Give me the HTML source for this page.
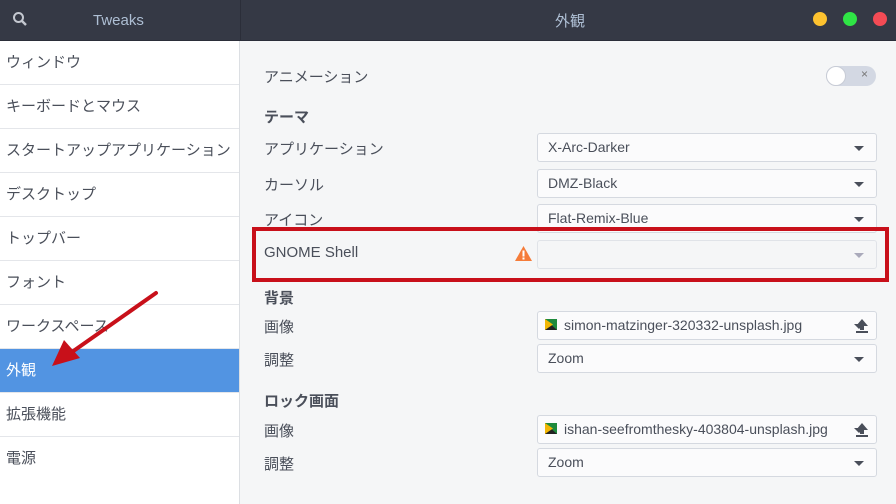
<!DOCTYPE html><html><head><meta charset="utf-8"><style>
*{margin:0;padding:0;box-sizing:border-box}
body{width:896px;height:504px;overflow:hidden;font-family:"Liberation Sans","Noto Sans CJK JP",sans-serif;background:#f5f6f7;position:relative;color:#5c616c}
.hdr{position:absolute;left:0;top:0;width:896px;height:41px;background:#353945;border-bottom:1px solid #2b2e39}
.sep{position:absolute;left:240px;top:0;width:1px;height:41px;background:#2b2e39}
.side{position:absolute;left:0;top:41px;width:240px;height:463px;background:#fff;border-right:1px solid #dcdfe3}
.row{height:44px;border-bottom:1px solid #e4e6ea;padding-left:6px;line-height:44px;font-size:15px;color:#4a4f5a}
.row.sel{background:#5294e2;color:#fff}
.lbl{position:absolute;font-size:15px;color:#4a4f5a}
.b{font-weight:bold;color:#4a4f5a}
.dd{position:absolute;left:537px;width:340px;height:29px;border:1px solid #d5d9e0;border-radius:3px;background:#fbfbfc;font-size:14px;color:#4a4f5a;padding-left:10px;line-height:27px}
.dd:after{content:"";position:absolute;right:12px;top:12px;border:5px solid transparent;border-top:5px solid #4a4f5a;border-bottom:0}
.dd.dis:after{border-top-color:#aab}
.dot{position:absolute;top:12px;width:14px;height:14px;border-radius:50%}
</style></head><body>
<div class="hdr"><div class="sep"></div>
<svg style="position:absolute;left:12px;top:11px" width="16" height="16"><circle cx="6.5" cy="6.5" r="4.5" fill="none" stroke="#c4c8d0" stroke-width="2"/><line x1="10" y1="10" x2="14" y2="14" stroke="#c4c8d0" stroke-width="2.4"/></svg>
<div style="position:absolute;left:93px;top:12px;font-size:15px;color:#aebfd4">Tweaks</div>
<div style="position:absolute;left:555px;top:10px;font-size:15px;color:#aebfd4">外観</div>
<div class="dot" style="left:813px;background:#fdc22f"></div>
<div class="dot" style="left:843px;background:#2fe545"></div>
<div class="dot" style="left:873px;background:#f44b55"></div>
</div>
<div class="side">
<div class="row">ウィンドウ</div><div class="row">キーボードとマウス</div><div class="row">スタートアップアプリケーション</div><div class="row">デスクトップ</div><div class="row">トップバー</div><div class="row">フォント</div><div class="row">ワークスペース</div><div class="row sel">外観</div><div class="row">拡張機能</div><div class="row" style="border:0">電源</div>
</div>
<div class="lbl" style="left:264px;top:66px">アニメーション</div>
<div style="position:absolute;left:826px;top:66px;width:50px;height:20px;border-radius:10px;background:#d3d8e3"><div style="position:absolute;left:0;top:0;width:20px;height:20px;border-radius:50%;background:#fff;border:1px solid #c8ccd6"></div><span style="position:absolute;left:35px;top:1px;font-size:12px;color:#777">×</span></div>
<div class="lbl b" style="left:264px;top:106px">テーマ</div>
<div class="lbl" style="left:264px;top:138px">アプリケーション</div>
<div class="dd" style="top:133px">X-Arc-Darker</div>
<div class="lbl" style="left:264px;top:174px">カーソル</div>
<div class="dd" style="top:169px">DMZ-Black</div>
<div class="lbl" style="left:264px;top:209px">アイコン</div>
<div class="dd" style="top:204px">Flat-Remix-Blue</div>
<div class="lbl" style="left:264px;top:244px;font-size:15px">GNOME Shell</div>
<svg style="position:absolute;left:515px;top:246px" width="17" height="15"><path d="M8.5 0L17 15H0Z" fill="#f57c3a"/><rect x="7.5" y="4.5" width="2" height="6" fill="#fff"/><rect x="7.5" y="11.5" width="2" height="2" fill="#fff"/></svg>
<div class="dd dis" style="top:240px;background:#f5f6f7;border-color:#e0e3e8"></div>
<div style="position:absolute;left:252px;top:227px;width:637px;height:55px;border:4px solid #c8101a"></div>
<div class="lbl b" style="left:264px;top:287px">背景</div>
<div class="lbl" style="left:264px;top:316px">画像</div>
<div class="dd" style="top:311px;padding-left:26px">simon-matzinger-320332-unsplash.jpg</div>
<div class="lbl" style="left:264px;top:349px">調整</div>
<div class="dd" style="top:344px">Zoom</div>
<div class="lbl b" style="left:264px;top:390px">ロック画面</div>
<div class="lbl" style="left:264px;top:420px">画像</div>
<div class="dd" style="top:415px;padding-left:26px">ishan-seefromthesky-403804-unsplash.jpg</div>
<div class="lbl" style="left:264px;top:453px">調整</div>
<div class="dd" style="top:448px">Zoom</div>
<svg style="position:absolute;left:545px;top:319px" width="12" height="11"><rect width="12" height="11" fill="#1e8a3c"/><path d="M0 0L12 11H0Z" fill="#222"/><path d="M0 0L8 5.5L0 11Z" fill="#f2b705"/></svg>
<svg style="position:absolute;left:545px;top:423px" width="12" height="11"><rect width="12" height="11" fill="#1e8a3c"/><path d="M0 0L12 11H0Z" fill="#222"/><path d="M0 0L8 5.5L0 11Z" fill="#f2b705"/></svg>
<svg style="position:absolute;left:855px;top:318px" width="14" height="15"><path d="M7 1L13 8H9V12H5V8H1Z" fill="#4a4f5a"/><rect x="1" y="13" width="12" height="2" fill="#4a4f5a"/></svg>
<svg style="position:absolute;left:855px;top:422px" width="14" height="15"><path d="M7 1L13 8H9V12H5V8H1Z" fill="#4a4f5a"/><rect x="1" y="13" width="12" height="2" fill="#4a4f5a"/></svg>
<svg style="position:absolute;left:0;top:0" width="300" height="400"><line x1="156" y1="293" x2="72" y2="352" stroke="#c8101a" stroke-width="4" stroke-linecap="round"/><path d="M52 366L64 340L80 358Z" fill="#c8101a"/></svg>
</body></html>
